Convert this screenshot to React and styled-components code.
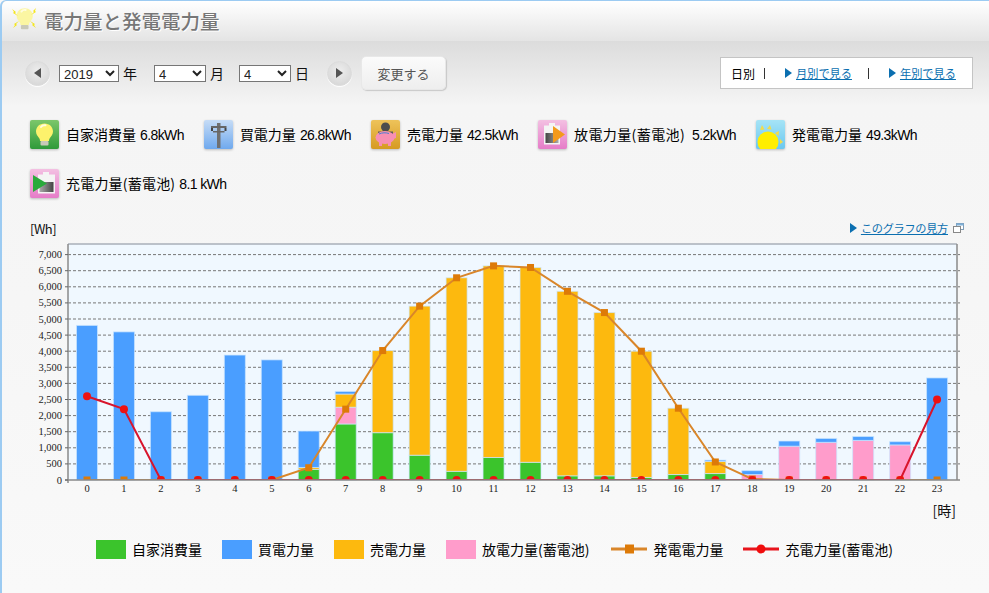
import React from 'react';
import styled, { createGlobalStyle } from 'styled-components';

const GlobalStyle = createGlobalStyle`
  html, body {
    margin: 0;
    padding: 0;
    background: #f8f8f8;
  }
  body {
    font-family: "Liberation Sans", "Noto Sans CJK JP", sans-serif;
    color: #111;
  }
`;

const Page = styled.div`
  width: 989px;
  height: 593px;
  box-sizing: border-box;
  overflow: hidden;
  border-top: 1px solid #9ccbf2;
  border-left: 2px solid #9ccbf2;
  border-top-left-radius: 6px;
  background: linear-gradient(to bottom, #dcdcdc 40px, #f5f5f5 105px, #f6f6f6 300px, #f9f9f9 100%);
`;

const Header = styled.header`
  height: 40px;
  display: flex;
  align-items: center;
  padding-left: 8px;
  background: linear-gradient(to bottom, #ffffff, #e4e4e4);
  border-top-left-radius: 5px;
`;

const Title = styled.h1`
  margin: 0 0 2px;
  font-size: 19.5px;
  font-weight: 500;
  color: #777;
  font-family: "Noto Sans CJK JP", sans-serif;
  text-shadow: 1px 1px 0 #fff;
`;

const Toolbar = styled.div`
  display: flex;
  align-items: center;
  height: 34px;
  margin-top: 15px;
  padding: 0 16px 0 23px;
`;

const NavButton = styled.button`
  width: 25px;
  height: 25px;
  padding: 0;
  border: 1px solid #dcdcdc;
  border-radius: 50%;
  background: radial-gradient(circle at 50% 40%, #eeeeee, #d2d2d2);
  box-shadow: 0 1px 1px #fff;
  display: flex;
  align-items: center;
  justify-content: center;
  flex: none;
  margin-right: ${p => p.$after || 0}px;
`;

const Arrow = styled.span`
  width: 0;
  height: 0;
  border-top: 5px solid transparent;
  border-bottom: 5px solid transparent;
  ${p => (p.$left ? 'border-right: 7px solid #555;' : 'border-left: 7px solid #555;')}
`;

const DateSelect = styled.select`
  width: ${p => p.$w}px;
  height: 17px;
  padding: 0;
  font-family: "Liberation Sans", sans-serif;
  font-size: 13px;
  color: #222;
  background: #fff;
  border: 1px solid #767676;
  border-radius: 0;
`;

const DateLabel = styled.span`
  font-size: 14px;
  font-family: "Noto Sans CJK JP", sans-serif;
  margin-left: 4px;
  margin-right: ${p => p.$after || 0}px;
  line-height: 17px;
`;

const ChangeButton = styled.button`
  width: 85px;
  height: 34px;
  padding: 0;
  border: 1px solid #e8e8e8;
  border-radius: 5px;
  background: linear-gradient(to bottom, #fbfbfb, #eeeeee);
  box-shadow: 1px 1px 1px #c8c8c8;
  color: #555;
  font-size: 13px;
  font-family: "Noto Sans CJK JP", sans-serif;
`;

const ViewBox = styled.nav`
  margin-left: auto;
  width: 253px;
  height: 32px;
  box-sizing: border-box;
  display: flex;
  align-items: center;
  padding-left: 10px;
  background: #fff;
  border: 1px solid #c4c4c4;
  font-size: 12px;
  font-family: "Noto Sans CJK JP", sans-serif;
  color: #000;
  white-space: nowrap;
`;

const Divider = styled.span`
  width: 1px;
  height: 11px;
  background: #333;
  margin: 0 ${p => p.$right}px 0 ${p => p.$left}px;
`;

const MoreLink = styled.a`
  display: flex;
  align-items: center;
  gap: 4px;
  color: #0b6fb0;
  text-decoration: underline;
  font-size: 11.2px;
  font-family: "Noto Sans CJK JP", sans-serif;
  white-space: nowrap;
  cursor: pointer;
  &::before {
    content: '';
    border-top: 5px solid transparent;
    border-bottom: 5px solid transparent;
    border-left: 7px solid #0b6fb0;
  }
`;

const Summary = styled.ul`
  list-style: none;
  margin: 0;
  padding: 0 0 0 27px;
  width: 930px;
  box-sizing: border-box;
  margin-top: 29px;
  display: flex;
  flex-wrap: wrap;
  column-gap: 19px;
  row-gap: 19px;
`;

const SummaryItem = styled.li`
  display: flex;
  align-items: center;
  gap: 6px;
  height: 30px;
  white-space: nowrap;
`;

const IconTile = styled.span`
  display: block;
  width: 31px;
  height: 31px;
  flex: none;
  filter: drop-shadow(0 1px 1px #bbb);
`;

const SummaryText = styled.span`
  font-size: 14px;
  font-family: "Noto Sans CJK JP", sans-serif;
  color: #000;
`;

const SummaryLabel = styled.span`
  letter-spacing: ${p => p.$spread || 0}px;
`;

const SummaryValue = styled.span`
  font-family: "Liberation Sans", sans-serif;
  letter-spacing: -0.6px;
  margin-left: ${p => p.$gap}px;
`;

const ChartHead = styled.div`
  display: flex;
  justify-content: space-between;
  align-items: center;
  height: 18px;
  margin-top: 21px;
  padding: 0 25px 0 28px;
`;

const UnitLabel = styled.span`
  font-size: 13px;
  font-family: "Noto Sans CJK JP", "Liberation Sans", sans-serif;
  letter-spacing: -0.5px;
  color: #111;
`;

const GuideLink = styled(MoreLink)`
  gap: 5px;
  letter-spacing: -0.3px;
  &::before {
    margin-right: -1px;
  }
`;

const ChartBox = styled.div`
  margin-top: 3px;
  padding-left: 28px;
  height: 254px;
`;

const Hours = styled.div`
  display: flex;
  justify-content: flex-end;
  height: 18px;
  padding-right: 33px;
  margin-top: 6px;
`;

const HourLabel = styled(UnitLabel)`
  font-size: 14px;
  letter-spacing: 0;
`;

const Legend = styled.ul`
  list-style: none;
  margin: 21px 0 0;
  padding: 0 0 0 94px;
  display: flex;
  align-items: center;
  gap: 20px;
`;

const LegendItem = styled.li`
  display: flex;
  align-items: center;
  gap: 6px;
  margin-left: ${p => p.$lead || 0}px;
  font-size: 14px;
  font-family: "Noto Sans CJK JP", sans-serif;
  color: #000;
  white-space: nowrap;
`;

const Swatch = styled.span`
  width: 30px;
  height: 19px;
  background: ${p => p.$color};
`;

const Bulb = ({ x = 0, y = 0, s = 1, color = '#fdf26c' }) => (
  <g transform={`translate(${x} ${y}) scale(${s})`}>
    <path d="M15.5 4.5c-5 0-8.5 3.6-8.5 8 0 3.4 2.2 5 3.4 7 .5 1 .6 1.800.6 2.500h9c0-.7.1-1.500.6-2.500 1.200-2 3.400-3.600 3.400-7 0-4.400-3.500-8-8.500-8z" fill={color} />
    <path d="M12 8c1-1.500 3-2 4.500-1.700" stroke="#fffde0" strokeWidth="2" fill="none" strokeLinecap="round" />
    <rect x="11.500" y="22" width="8" height="4.500" rx="1" fill="#c9c9b8" />
  </g>
);

const tiles = {
  self: (
    <svg viewBox="0 0 31 31" width="31" height="31">
      <defs>
        <linearGradient id="tileGreen" x1="0" y1="0" x2="0" y2="1">
          <stop offset="0" stopColor="#7cc76a" />
          <stop offset="1" stopColor="#2f9a3a" />
        </linearGradient>
      </defs>
      <rect x="1" y="1" width="29" height="29" rx="2" fill="url(#tileGreen)" />
      <Bulb />
    </svg>
  ),
  buy: (
    <svg viewBox="0 0 31 31" width="31" height="31">
      <defs>
        <linearGradient id="tileBlue" x1="0" y1="0" x2="0" y2="1">
          <stop offset="0" stopColor="#c6dcf6" />
          <stop offset="1" stopColor="#6fa9ee" />
        </linearGradient>
      </defs>
      <rect x="1" y="1" width="29" height="29" rx="2" fill="url(#tileBlue)" />
      <rect x="14" y="4" width="3.500" height="25" fill="#707070" />
      <rect x="8" y="7" width="15.500" height="2" fill="#666" />
      <rect x="10" y="12" width="11.500" height="1.500" fill="#666" />
      <rect x="8" y="9" width="2" height="3" fill="#444" />
      <rect x="21.500" y="9" width="2" height="3" fill="#444" />
    </svg>
  ),
  sell: (
    <svg viewBox="0 0 31 31" width="31" height="31">
      <defs>
        <linearGradient id="tileGold" x1="0" y1="0" x2="0" y2="1">
          <stop offset="0" stopColor="#eec35a" />
          <stop offset="1" stopColor="#d69a22" />
        </linearGradient>
      </defs>
      <rect x="1" y="1" width="29" height="29" rx="2" fill="url(#tileGold)" />
      <circle cx="15.500" cy="8" r="4.500" fill="#4d4d4d" />
      <path d="M8 12.500h15v3H8z" fill="#5a5a5a" />
      <ellipse cx="15" cy="18.500" rx="9.500" ry="6.500" fill="#f78fb3" />
      <path d="M22 15l4-2v6l-3 1z" fill="#f78fb3" />
      <rect x="9" y="23" width="3" height="4" fill="#f78fb3" />
      <rect x="18" y="23" width="3" height="4" fill="#f78fb3" />
      <path d="M9 15c3-1.500 7-1.500 10-.5" stroke="#4a7fd0" strokeWidth="1" fill="none" />
    </svg>
  ),
  discharge: (
    <svg viewBox="0 0 31 31" width="31" height="31">
      <defs>
        <linearGradient id="tilePink" x1="0" y1="0" x2="0" y2="1">
          <stop offset="0" stopColor="#f3c0e2" />
          <stop offset="1" stopColor="#e67cc8" />
        </linearGradient>
        <linearGradient id="cellGray" x1="0" y1="0" x2="1" y2="0">
          <stop offset="0" stopColor="#444" />
          <stop offset="1" stopColor="#aaa" />
        </linearGradient>
      </defs>
      <rect x="1" y="1" width="29" height="29" rx="2" fill="url(#tilePink)" />
      <rect x="12" y="4" width="6" height="3" fill="#f4f4f4" />
      <rect x="7" y="6.500" width="16" height="19" fill="#f4f4f4" />
      <rect x="8.500" y="14" width="13" height="10" fill="url(#cellGray)" />
      <path d="M16 7l12 8.500-12 8.500z" fill="#f39a1c" />
    </svg>
  ),
  sun: (
    <svg viewBox="0 0 31 31" width="31" height="31">
      <defs>
        <linearGradient id="tileSky" x1="0" y1="0" x2="0" y2="1">
          <stop offset="0" stopColor="#a6e4f6" />
          <stop offset="1" stopColor="#6cc8f0" />
        </linearGradient>
        <clipPath id="tileClip">
          <rect x="1" y="1" width="29" height="29" rx="2" />
        </clipPath>
      </defs>
      <rect x="1" y="1" width="29" height="29" rx="2" fill="url(#tileSky)" />
      <g clipPath="url(#tileClip)">
        <circle cx="13" cy="23" r="10.500" fill="#ffee00" />
        <path d="M5 11l2-5 2.500 4.500zM12 10l3-4 1.500 4.500zM20 14l4-2-.5 5zM25 20l3 3-3 2z" fill="#f2dc4a" />
      </g>
    </svg>
  ),
  charge: (
    <svg viewBox="0 0 31 31" width="31" height="31">
      <defs>
        <linearGradient id="tilePink2" x1="0" y1="0" x2="0" y2="1">
          <stop offset="0" stopColor="#f3c0e2" />
          <stop offset="1" stopColor="#e67cc8" />
        </linearGradient>
        <linearGradient id="cellGray2" x1="0" y1="0" x2="1" y2="0">
          <stop offset="0" stopColor="#aaa" />
          <stop offset="1" stopColor="#444" />
        </linearGradient>
      </defs>
      <rect x="1" y="1" width="29" height="29" rx="2" fill="url(#tilePink2)" />
      <rect x="14" y="4" width="6" height="3" fill="#f4f4f4" />
      <rect x="9" y="6.500" width="17" height="19" fill="#f4f4f4" />
      <rect x="10.500" y="14" width="14" height="10" fill="url(#cellGray2)" />
      <path d="M4 7l14 8.500L4 24z" fill="#2aaa3c" />
    </svg>
  ),
};

const summaryItems = [
  { key: 'self', label: '自家消費量', value: '6.8kWh', gap: 4 },
  { key: 'buy', label: '買電力量', value: '26.8kWh', gap: 4 },
  { key: 'sell', label: '売電力量', value: '42.5kWh', gap: 4 },
  { key: 'discharge', label: '放電力量(蓄電池)', value: '5.2kWh', gap: 7, spread: 0.4 },
  { key: 'sun', label: '発電電力量', value: '49.3kWh', gap: 4 },
  { key: 'charge', label: '充電力量(蓄電池)', value: '8.1 kWh', gap: 4, spread: 0.2 },
];

// per hour amounts, stacked from the axis up in ORDER
const hours = [
  { blue: 4800 },
  { blue: 4600 },
  { blue: 2120 },
  { blue: 2630 },
  { blue: 3880 },
  { blue: 3730 },
  { green: 330, orange: 60, blue: 1130 },
  { green: 1740, pink: 520, orange: 410, blue: 80 },
  { green: 1470, orange: 2550 },
  { green: 770, orange: 4630 },
  { green: 270, orange: 6010 },
  { green: 700, orange: 5950 },
  { green: 550, orange: 6050 },
  { green: 130, orange: 5730 },
  { green: 130, orange: 5070 },
  { green: 80, orange: 3920 },
  { green: 170, orange: 2060 },
  { green: 200, orange: 380, blue: 40 },
  { pink: 170, blue: 120 },
  { pink: 1050, blue: 160 },
  { pink: 1170, blue: 120 },
  { pink: 1230, blue: 120 },
  { pink: 1090, blue: 100 },
  { blue: 3170 },
];

const COLORS = { green: '#3bc42c', blue: '#4a9eff', orange: '#fdb90e', pink: '#ff9ccb' };
const ORDER = ['green', 'pink', 'orange', 'blue'];

const generated = [0, 0, 0, 0, 0, 0, 380, 2200, 4020, 5400, 6280, 6650, 6600, 5860, 5200, 4000, 2230, 560, 30, 0, 0, 0, 0, 0];
const charged = [2600, 2200, 0, 0, 0, 0, 0, 0, 0, 0, 0, 0, 0, 0, 0, 0, 0, 0, 0, 0, 0, 0, 0, 2500];

const PLOT = { left: 68, right: 957, top: 244, bottom: 480 };
const xAt = i => 87 + i * 36.96;
const yAt = v => PLOT.bottom - v * 0.0322;
const ticks = Array.from({ length: 15 }, (_, i) => i * 500);
const points = values => values.map((v, i) => `${xAt(i)},${yAt(v)}`).join(' ');

const UsageChart = () => (
  <svg width="940" height="254" viewBox="30 240 940 254" style={{ display: 'block' }}>
    <defs>
      <clipPath id="plotClip">
        <rect x={PLOT.left} y={PLOT.top} width={PLOT.right - PLOT.left} height={PLOT.bottom - PLOT.top} />
      </clipPath>
    </defs>
    <rect x={PLOT.left} y={PLOT.top} width={PLOT.right - PLOT.left} height={PLOT.bottom - PLOT.top} fill="#f0f8ff" />
    {ticks.slice(1).map(t => (
      <line key={t} x1={PLOT.left} x2={PLOT.right + 3} y1={yAt(t)} y2={yAt(t)} stroke="#777" strokeWidth="1" strokeDasharray="3 2" />
    ))}
    {hours.map((h, i) => {
      let base = 0;
      return ORDER.filter(c => h[c]).map(c => {
        const y = yAt(base + h[c]);
        const height = h[c] * 0.0322;
        base += h[c];
        return (
          <rect key={`${i}-${c}`} x={xAt(i) - 10.500} y={y} width="21" height={height} fill={COLORS[c]} stroke="#cbe6ff" strokeWidth="1" strokeOpacity="0.7" />
        );
      });
    })}
    <path d={`M${PLOT.left} ${PLOT.top}H${PLOT.right}`} stroke="#a9afb8" strokeWidth="1.500" />
    <path d={`M${PLOT.left} ${PLOT.top}V${PLOT.bottom + 3}`} stroke="#8a8a8a" strokeWidth="1.500" />
    <path d={`M${PLOT.right} ${PLOT.top}V${PLOT.bottom}`} stroke="#8a8a8a" strokeWidth="1.500" />
    <g clipPath="url(#plotClip)">
      <polyline points={points(generated)} fill="none" stroke="#d9862a" strokeWidth="2" />
      {generated.map((v, i) => (
        <rect key={i} x={xAt(i) - 3.500} y={yAt(v) - 3.500} width="7" height="7" fill="#dd7a08" />
      ))}
      <polyline points={points(charged)} fill="none" stroke="#d8142c" strokeWidth="2" />
      {charged.map((v, i) => (
        <circle key={i} cx={xAt(i)} cy={yAt(v)} r="4" fill="#ee1111" />
      ))}
    </g>
    <path d={`M${PLOT.left - 3} ${PLOT.bottom}H${PLOT.right + 3}`} stroke="#8a8a8a" strokeWidth="1.500" />
    {ticks.map(t => (
      <g key={t}>
        <line x1={PLOT.left - 3} x2={PLOT.left} y1={yAt(t)} y2={yAt(t)} stroke="#666" />
        <text x={PLOT.left - 6} y={yAt(t) + 3.500} textAnchor="end" fontFamily="Liberation Serif, serif" fontSize="10.500" fill="#222">
          {t.toLocaleString('en-US')}
        </text>
      </g>
    ))}
    {hours.map((_, i) => (
      <text key={i} x={xAt(i)} y={PLOT.bottom + 12} textAnchor="middle" fontFamily="Liberation Serif, serif" fontSize="10.500" fill="#222">
        {i}
      </text>
    ))}
  </svg>
);

const legendBars = [
  { label: '自家消費量', color: COLORS.green },
  { label: '買電力量', color: COLORS.blue },
  { label: '売電力量', color: COLORS.orange },
  { label: '放電力量(蓄電池)', color: COLORS.pink },
];

const App = () => (
  <>
    <GlobalStyle />
    <Page>
      <Header>
        <svg width="34" height="34" viewBox="0 0 34 34">
          <Bulb s={0.95} color="#fbf6a2" />
          <path d="M2 5l4 3-1 1 3 3-5-3 1-1zM26 4l-3 3 1 1-3 3 5-3-1-1zM3 24l4-3-1-1 3-3-5 3 1 1zM26 24l-4-3 1-1-3-3 5 3-1 1z" fill="#f4e61e" />
        </svg>
        <Title>電力量と発電電力量</Title>
      </Header>
      <Toolbar>
        <NavButton $after={9} aria-label="前の日"><Arrow $left /></NavButton>
        <DateSelect $w={60} defaultValue="2019"><option>2019</option></DateSelect>
        <DateLabel $after={17}>年</DateLabel>
        <DateSelect $w={52} defaultValue="4"><option>4</option></DateSelect>
        <DateLabel $after={15}>月</DateLabel>
        <DateSelect $w={52} defaultValue="4"><option>4</option></DateSelect>
        <DateLabel $after={18}>日</DateLabel>
        <NavButton $after={9} aria-label="次の日"><Arrow /></NavButton>
        <ChangeButton>変更する</ChangeButton>
        <ViewBox>
          日別
          <Divider $left={9} $right={20} />
          <MoreLink>月別で見る</MoreLink>
          <Divider $left={16} $right={20} />
          <MoreLink>年別で見る</MoreLink>
        </ViewBox>
      </Toolbar>
      <Summary>
        {summaryItems.map(item => (
          <SummaryItem key={item.key}>
            <IconTile>{tiles[item.key]}</IconTile>
            <SummaryText>
              <SummaryLabel $spread={item.spread}>{item.label}</SummaryLabel>
              <SummaryValue $gap={item.gap}>{item.value}</SummaryValue>
            </SummaryText>
          </SummaryItem>
        ))}
      </Summary>
      <ChartHead>
        <UnitLabel>[Wh]</UnitLabel>
        <GuideLink>
          このグラフの見方
          <svg width="11" height="10" viewBox="0 0 11 10">
            <rect x="3.500" y="0.500" width="7" height="6" fill="#fff" stroke="#7f9db8" />
            <rect x="3.500" y="0.500" width="7" height="2" fill="#7fb0d8" />
            <rect x="0.500" y="3.500" width="7" height="6" fill="#fff" stroke="#888" />
          </svg>
        </GuideLink>
      </ChartHead>
      <ChartBox>
        <UsageChart />
      </ChartBox>
      <Hours>
        <HourLabel>[時]</HourLabel>
      </Hours>
      <Legend>
        {legendBars.map(b => (
          <LegendItem key={b.label}>
            <Swatch $color={b.color} />
            {b.label}
          </LegendItem>
        ))}
        <LegendItem $lead={2}>
          <svg width="36" height="14" viewBox="0 0 36 14">
            <line x1="0" x2="36" y1="7" y2="7" stroke="#d9862a" strokeWidth="3" />
            <rect x="14" y="2.500" width="9" height="9" fill="#dd7a08" />
          </svg>
          発電電力量
        </LegendItem>
        <LegendItem>
          <svg width="36" height="14" viewBox="0 0 36 14">
            <line x1="0" x2="36" y1="7" y2="7" stroke="#e8141c" strokeWidth="3" />
            <circle cx="18" cy="7" r="4.500" fill="#f00d0d" />
          </svg>
          充電力量(蓄電池)
        </LegendItem>
      </Legend>
    </Page>
  </>
);

export default App;
